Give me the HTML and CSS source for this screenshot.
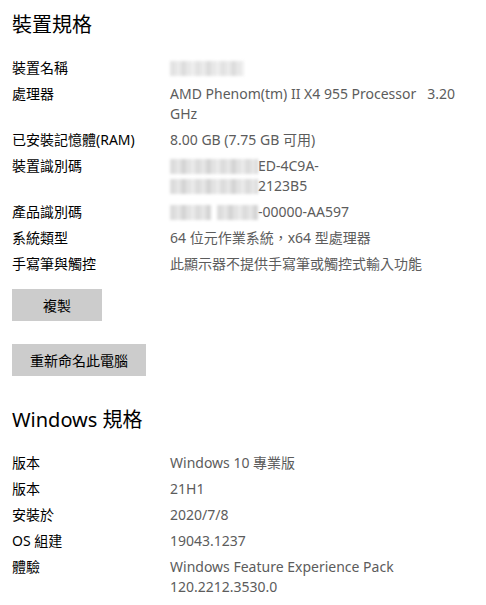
FILE: index.html
```html
<!DOCTYPE html>
<html lang="zh-Hant">
<head>
    <meta charset="UTF-8">
    <meta name="viewport" content="width=device-width, initial-scale=1.0">
    <title>關於</title>
    <link rel="stylesheet" href="styles.css">
</head>
<body>
    <div class="page">
        <h2 class="section-title">裝置規格</h2>
        <dl class="specs">
            <dt>裝置名稱</dt>
            <dd><span class="mask mask-name"></span></dd>

            <dt>處理器</dt>
            <dd class="keep-spaces">AMD Phenom(tm) II X4 955 Processor   3.20 GHz</dd>

            <dt>已安裝記憶體(RAM)</dt>
            <dd>8.00 GB (7.75 GB 可用)</dd>

            <dt>裝置識別碼</dt>
            <dd><span class="mask mask-id"></span>ED-4C9A-<br><span class="mask mask-id"></span>2123B5</dd>

            <dt>產品識別碼</dt>
            <dd><span class="mask mask-key"></span><span class="mask mask-key"></span>-00000-AA597</dd>

            <dt>系統類型</dt>
            <dd>64 位元作業系統，x64 型處理器</dd>

            <dt>手寫筆與觸控</dt>
            <dd>此顯示器不提供手寫筆或觸控式輸入功能</dd>
        </dl>

        <div class="actions">
            <button type="button" class="btn btn-copy">複製</button>
            <button type="button" class="btn">重新命名此電腦</button>
        </div>

        <h2 class="section-title">Windows 規格</h2>
        <dl class="specs">
            <dt>版本</dt>
            <dd>Windows 10 專業版</dd>

            <dt>版本</dt>
            <dd>21H1</dd>

            <dt>安裝於</dt>
            <dd>2020/7/8</dd>

            <dt>OS 組建</dt>
            <dd>19043.1237</dd>

            <dt>體驗</dt>
            <dd>Windows Feature Experience Pack 120.2212.3530.0</dd>
        </dl>
    </div>
</body>
</html>
```

FILE: styles.css
```css
/* Page */
body {
    margin: 0;
    background: #ffffff;
    color: #000000;
    font-family: 'Noto Sans', 'Noto Sans CJK TC', sans-serif;
    font-size: 14px;
}

.page {
    padding: 11px 12px 0 12px;
}

/* Section headings */
.section-title {
    margin: 0 0 19px 0;
    font-size: 20px;
    line-height: 28px;
    font-weight: normal;
}

/* Spec rows */
.specs {
    display: grid;
    grid-template-columns: 158px 1fr;
    row-gap: 6px;
    margin: 0;
    line-height: 20px;
}

.specs dt {
    color: #000000;
}

.specs dd {
    margin: 0;
    color: #5c5c5c;
    padding-right: 14px;
}

.keep-spaces {
    white-space: pre-wrap;
}

/* Pixelated hidden values */
.mask {
    display: inline-block;
    height: 15px;
    vertical-align: -3px;
    background:
        repeating-linear-gradient(90deg, #dcdcdc 0 6px, #e6e6e6 6px 11px, #d4d4d4 11px 16px, #e2e2e2 16px 21px, #ebebeb 21px 25px);
    filter: blur(1.5px);
}

.mask-name {
    width: 74px;
    opacity: 0.8;
}

.mask-id {
    width: 88px;
}

.mask-key {
    width: 41px;
    margin-right: 6px;
}

.mask-key + .mask-key {
    margin-right: 0;
}

/* Buttons */
.actions {
    display: flex;
    flex-direction: column;
    align-items: flex-start;
    gap: 23px;
    margin: 15px 0 30px 0;
}

.btn {
    background: #cccccc;
    color: #000000;
    border: none;
    height: 32px;
    padding: 0 18px;
    font-family: inherit;
    font-size: 14px;
    cursor: pointer;
}

.btn-copy {
    min-width: 90px;
}
```
